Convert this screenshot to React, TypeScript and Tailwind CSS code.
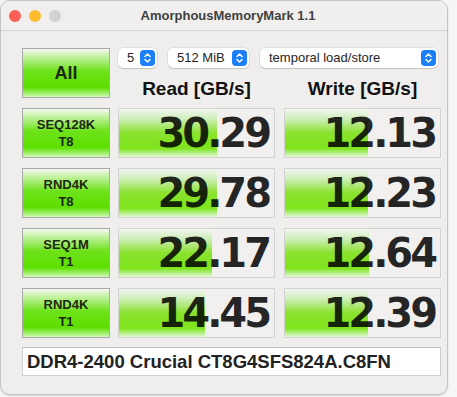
import React from "react";

const results = [
  { label: "SEQ128K", sub: "T8", read: "30.29", readW: 98, write: "12.13", writeW: 83 },
  { label: "RND4K", sub: "T8", read: "29.78", readW: 98, write: "12.23", writeW: 83 },
  { label: "SEQ1M", sub: "T1", read: "22.17", readW: 93, write: "12.64", writeW: 84 },
  { label: "RND4K", sub: "T1", read: "14.45", readW: 86, write: "12.39", writeW: 83 },
];

const btn =
  "border border-[#a9a9a9] bg-[linear-gradient(to_bottom,#f6faf2_0%,#c2f2a2_16%,#6ee21a_46%,#5ddf00_80%,#9ff06a_92%,#d6f9bf_100%)] flex flex-col items-center justify-center text-[#1c2812] font-bold [font-family:'Liberation_Sans',Arial,sans-serif]";

function Stepper() {
  return (
    <span className="w-[15px] h-[16px] rounded-[4px] bg-[#1b7ff8] flex items-center justify-center">
      <svg width="9" height="12" viewBox="0 0 9 12" fill="none">
        <path d="M2 4.5 L4.5 2 L7 4.5" stroke="white" strokeWidth="1.5" strokeLinecap="round" strokeLinejoin="round" />
        <path d="M2 7.5 L4.5 10 L7 7.5" stroke="white" strokeWidth="1.5" strokeLinecap="round" strokeLinejoin="round" />
      </svg>
    </span>
  );
}

function Select({ text, width }: { text: string; width: string }) {
  return (
    <div
      className={`${width} h-[20px] bg-white rounded-[5px] shadow-[0_0_0_0.5px_rgba(0,0,0,0.12),0_1px_1px_rgba(0,0,0,0.12)] flex items-center justify-between pl-[9px] pr-[2px] text-[13px] text-[#262626] [font-family:'Liberation_Sans',Arial,sans-serif]`}
    >
      <span>{text}</span>
      <Stepper />
    </div>
  );
}

function Meter({ value, fill }: { value: string; fill: number }) {
  return (
    <div
      className="w-[157px] h-[50px] border border-[#d2d2d2] bg-[#f1f0ef] bg-no-repeat bg-[linear-gradient(to_bottom,#f2f6f0_0%,#d0eeba_20%,#8ae22e_50%,#7fe51c_82%,#b5f08a_92%,#e6fad6_100%)] flex items-center justify-end pr-[5px] text-[40px] leading-none font-bold tracking-[-3px] text-black/85 [font-family:'DejaVu_Sans',Verdana,sans-serif]"
      style={{ backgroundSize: `${fill}px 100%` }}
    >
      {value}
    </div>
  );
}

export default function App() {
  return (
    <div className="w-[457px] h-[397px] bg-[#f6f6f6]">
      <div className="w-[448px] h-[395px] rounded-[10px] border border-[#c4c4c4] bg-[#efeeed] overflow-hidden shadow-[0_1px_2px_rgba(0,0,0,0.15)]">
        <div className="h-[30px] border-b border-[#d3d3d3] bg-[#f0efee] flex items-center">
          <div className="flex gap-[8px] pl-[8px]">
            <span className="w-[12px] h-[12px] rounded-full bg-[#fe5f57]" />
            <span className="w-[12px] h-[12px] rounded-full bg-[#febc2e]" />
            <span className="w-[12px] h-[12px] rounded-full bg-[#d2d1d0]" />
          </div>
          <div className="flex-1 text-center pr-[52px] text-[13px] font-bold text-[#3f3f3f] [font-family:'Liberation_Sans',Arial,sans-serif]">
            AmorphousMemoryMark 1.1
          </div>
        </div>

        <div className="pl-[21px] pt-[17px] flex flex-col">
          <div className="flex">
            <button className={`${btn} w-[88px] h-[50px] text-[18px]`}>All</button>
            <div className="ml-[8px] flex flex-col">
              <div className="flex gap-[11px] items-center">
                <Select text="5" width="w-[39px]" />
                <Select text="512 MiB" width="w-[81px]" />
                <Select text="temporal load/store" width="w-[178px]" />
              </div>
              <div className="flex gap-[9px] mt-[11px] text-[19px] leading-[19px] font-bold text-[#111] [font-family:'Liberation_Sans',Arial,sans-serif]">
                <div className="w-[157px] text-center">Read [GB/s]</div>
                <div className="w-[157px] text-center">Write [GB/s]</div>
              </div>
            </div>
          </div>

          <div className="flex flex-col gap-[10px] mt-[10px]">
            {results.map((r, i) => (
              <div key={i} className="flex">
                <button className={`${btn} w-[88px] h-[50px] text-[13px] leading-[17px]`}>
                  <span>{r.label}</span>
                  <span>{r.sub}</span>
                </button>
                <div className="ml-[8px]">
                  <Meter value={r.read} fill={r.readW} />
                </div>
                <div className="ml-[9px]">
                  <Meter value={r.write} fill={r.writeW} />
                </div>
              </div>
            ))}
          </div>

          <div className="mt-[9px] w-[419px] h-[29px] bg-white border border-[#cfcfcf] border-t-[#bdbdbd] flex items-center pl-[4px] text-[18.5px] font-bold text-[#222] [font-family:'Liberation_Sans',Arial,sans-serif]">
            DDR4-2400 Crucial CT8G4SFS824A.C8FN
          </div>
        </div>
      </div>
    </div>
  );
}
